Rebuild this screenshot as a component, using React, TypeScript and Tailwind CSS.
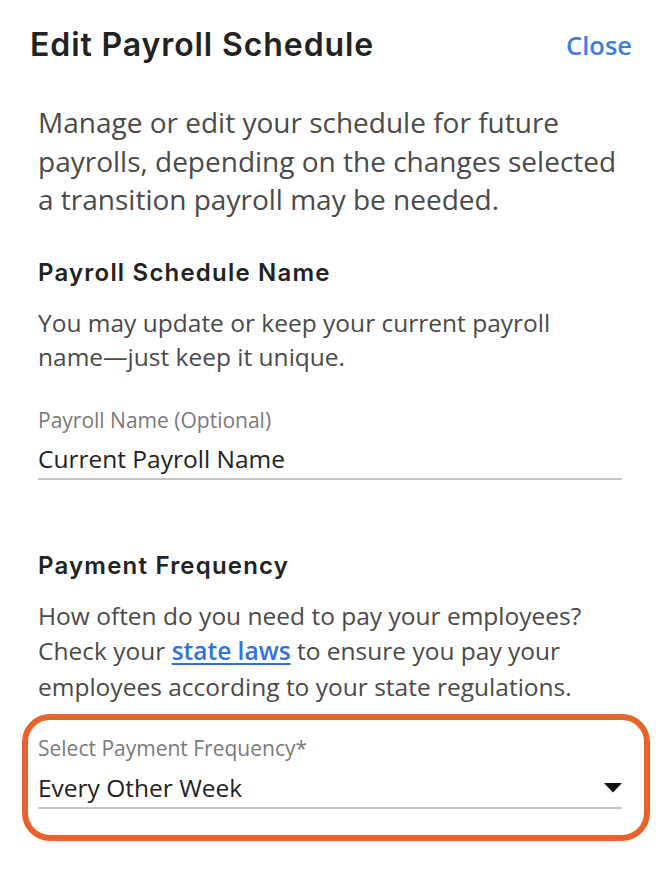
import { FC } from "react";

const Caret: FC = () => (
  <svg width="18" height="10" viewBox="0 0 18 10" className="shrink-0">
    <path d="M0 0 L18 0 L9 9.5 Z" fill="#111" />
  </svg>
);

const App: FC = () => {
  return (
    <div className="w-[672px] h-[874px] bg-white font-['Open_Sans',sans-serif] overflow-hidden">
      <div className="flex items-center justify-between pl-[30px] pr-[40px] pt-[27px]">
        <h1 className="font-['Inter',sans-serif] font-semibold text-[32px] tracking-[0.9px] leading-[36px] text-[#222]">
          Edit Payroll Schedule
        </h1>
        <button className="font-['Open_Sans',sans-serif] font-semibold text-[25.5px] leading-[36px] text-[#3b7de0]">
          Close
        </button>
      </div>

      <div className="pl-[38px] pr-[48px]">
        <p className="mt-[40px] text-[28px] leading-[38.5px] text-[#4a4a4a]">
          Manage or edit your schedule for future payrolls, depending on the changes selected a
          transition payroll may be needed.
        </p>

        <h2 className="mt-[39px] font-['Inter',sans-serif] font-semibold text-[24px] tracking-[1.2px] leading-[30px] text-[#222]">
          Payroll Schedule Name
        </h2>
        <p className="mt-[18px] pr-[20px] text-[24.5px] leading-[34px] text-[#4a4a4a]">
          You may update or keep your current payroll name—just keep it unique.
        </p>

        <div className="mt-[33px] pr-[2px]">
          <div className="text-[21px] leading-[26px] text-[#7a7a7a]">Payroll Name (Optional)</div>
          <div className="mt-[10px] pb-[3px] text-[24.5px] leading-[32px] text-[#222] border-b-2 border-[#c4c4c4]">
            Current Payroll Name
          </div>
        </div>

        <h2 className="mt-[71px] font-['Inter',sans-serif] font-semibold text-[24px] tracking-[1.2px] leading-[30px] text-[#222]">
          Payment Frequency
        </h2>
        <p className="mt-[17px] text-[24.5px] leading-[35.5px] text-[#4a4a4a]">
          How often do you need to pay your employees? Check your{" "}
          <a href="#" className="font-semibold text-[#2f74dc] underline underline-offset-[3px]">
            state laws
          </a>{" "}
          to ensure you pay your employees according to your state regulations.
        </p>
      </div>

      <div className="mx-[22px] mt-[10px] h-[127px] rounded-[28px] border-[6px] border-[#e8632c] pl-[10px] pr-[22px] pt-[15px]">
        <div className="text-[21px] leading-[26px] text-[#7a7a7a]">Select Payment Frequency*</div>
        <div className="mt-[11px] pb-[3px] flex items-center justify-between border-b-2 border-[#c4c4c4]">
          <span className="text-[24.5px] leading-[32px] text-[#222]">Every Other Week</span>
          <Caret />
        </div>
      </div>
    </div>
  );
};

export default App;
